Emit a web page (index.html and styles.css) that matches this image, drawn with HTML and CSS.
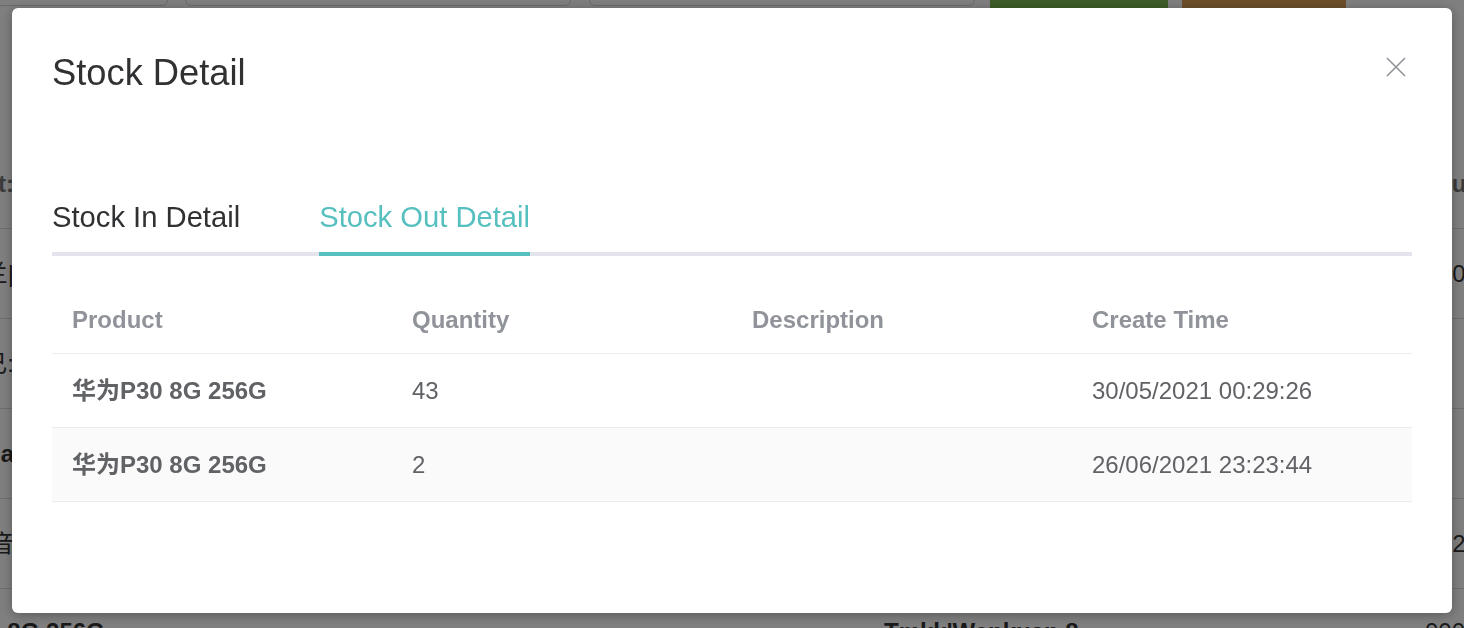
FILE: index.html
```html
<!DOCTYPE html>
<html lang="en">
<head>
<meta charset="utf-8">
<title>Stock Detail</title>
<link rel="stylesheet" href="styles.css">
</head>
<body>
<div class="page">
  <div class="toolbar">
    <div class="input"></div>
    <div class="input"></div>
    <div class="input"></div>
    <div class="btn btn-green"></div>
    <div class="btn btn-orange"></div>
  </div>
  <div class="list">
    <div class="list-row list-head">
      <div class="c-left">Product:</div>
      <div class="c-mid"></div>
      <div class="c-right">Quantity</div>
    </div>
    <div class="list-row">
      <div class="c-left">华为荣耀 兰|</div>
      <div class="c-mid"></div>
      <div class="c-right num">10</div>
    </div>
    <div class="list-row">
      <div class="c-left">小米 已:</div>
      <div class="c-mid"></div>
      <div class="c-right num"></div>
    </div>
    <div class="list-row">
      <div class="c-left strong">Xiaomi na</div>
      <div class="c-mid"></div>
      <div class="c-right num"></div>
    </div>
    <div class="list-row">
      <div class="c-left">联想 音</div>
      <div class="c-mid"></div>
      <div class="c-right num">1220</div>
    </div>
    <div class="list-row list-last">
      <div class="c-first strong">华为P30 8G 256G</div>
      <div class="c-mid2 strong">Tmkk'Wenkuan 8</div>
      <div class="c-end">0001</div>
    </div>
  </div>
</div>

<div class="overlay">
  <div class="modal">
    <div class="modal-header">
      <h2 class="modal-title">Stock Detail</h2>
      <button class="close" type="button" aria-label="Close">
        <svg width="20" height="20" viewBox="0 0 20 20"><path d="M1 1 L19 19 M19 1 L1 19" stroke="#909399" stroke-width="1.6" fill="none"/></svg>
      </button>
    </div>
    <div class="tabs">
      <div class="tab">Stock In Detail</div>
      <div class="tab active">Stock Out Detail</div>
    </div>
    <table class="detail">
      <thead>
        <tr><th>Product</th><th>Quantity</th><th>Description</th><th>Create Time</th></tr>
      </thead>
      <tbody>
        <tr><td class="prod">华为P30 8G 256G</td><td>43</td><td></td><td>30/05/2021 00:29:26</td></tr>
        <tr class="stripe"><td class="prod">华为P30 8G 256G</td><td>2</td><td></td><td>26/06/2021 23:23:44</td></tr>
      </tbody>
    </table>
  </div>
</div>
</body>
</html>
```

FILE: styles.css
```css
html, body {
  margin: 0;
  padding: 0;
  background: #ffffff;
  overflow: hidden;
  height: 628px;
}
body {
  font-family: "Liberation Sans", "Noto Sans CJK SC", Arial, sans-serif;
  color: #303133;
}

/* ---------- page behind the dialog ---------- */
.page {
  width: 1464px;
  height: 628px;
  overflow: hidden;
}
.toolbar {
  display: flex;
  align-items: flex-start;
  margin-top: -34px;
  margin-left: -218px;
}
.input {
  flex: none;
  width: 386px;
  height: 40px;
  box-sizing: border-box;
  border: 1px solid #d6d6da;
  border-radius: 6px;
  background: #fff;
  margin-right: 17px;
}
.input:nth-child(2) { margin-right: 18px; }
.input:nth-child(3) { margin-right: 15px; }
.btn {
  flex: none;
  height: 52px;
  border-radius: 6px;
}
.btn-green {
  width: 178px;
  background: #7ab850;
  margin-right: 14px;
}
.btn-orange {
  width: 164px;
  background: #d89e54;
}
.list {
  margin-top: 121px;
}
.list-row {
  display: flex;
  height: 90px;
  align-items: center;
  border-bottom: 1px solid #dcdce0;
  box-sizing: border-box;
  font-size: 24px;
  line-height: 28px;
  color: #333;
}
.list-row > div {
  flex: none;
  white-space: nowrap;
  overflow: hidden;
  height: 28px;
}
.list-head { color: #777; font-weight: bold; }
.c-left {
  width: 300px;
  margin-left: -286px;
  text-align: right;
}
.c-mid {
  width: 1419px;
}
.c-right {
  width: 200px;
}
.c-right.num {
  padding-left: 6px;
}
.list-last {
  align-items: flex-start;
  padding-top: 29px;
}
.c-first {
  width: 300px;
  margin-left: -90px;
}
.c-mid2 {
  width: 541px;
  margin-left: 674px;
}
.c-end {
  width: 200px;
}
.strong { font-weight: bold; }

/* ---------- overlay + dialog ---------- */
.overlay {
  position: fixed;
  inset: 0;
  background: rgba(0, 0, 0, 0.5);
  padding-top: 8px;
}
.modal {
  width: 1440px;
  height: 605px;
  margin: 0 auto;
  box-sizing: border-box;
  padding: 47px 40px 0;
  background: #fff;
  border-radius: 6px;
  box-shadow: 0 2px 12px rgba(0, 0, 0, 0.3);
}
.modal-header {
  display: flex;
  justify-content: space-between;
  align-items: flex-start;
}
.modal-title {
  margin: 0;
  font-size: 36.3px;
  line-height: 36px;
  font-weight: normal;
  color: #303133;
}
.close {
  width: 20px;
  height: 20px;
  padding: 0;
  margin: 2px 6px 0 0;
  border: 0;
  background: transparent;
  display: flex;
}

.tabs {
  display: flex;
  gap: 79px;
  margin-top: 106px;
  box-shadow: inset 0 -4px 0 #e4e4ec;
}
.tab {
  font-size: 29.2px;
  line-height: 40px;
  padding-bottom: 15px;
  border-bottom: 4px solid transparent;
  color: #303133;
}
.tab.active {
  color: #56bfbf;
  border-bottom-color: #56bfbf;
}

.detail {
  width: 100%;
  margin-top: 30px;
  border-collapse: collapse;
  table-layout: fixed;
  font-size: 24px;
}
.detail th {
  text-align: left;
  font-weight: bold;
  color: #909399;
  padding: 20px 20px;
  line-height: 27px;
  border-bottom: 1px solid #ebebf0;
}
.detail td {
  text-align: left;
  color: #606266;
  padding: 24px 20px;
  line-height: 25px;
  border-bottom: 1px solid #ebebf0;
}
.detail td.prod {
  font-weight: bold;
}
.detail tr.stripe td {
  background: #fafafa;
}
```
